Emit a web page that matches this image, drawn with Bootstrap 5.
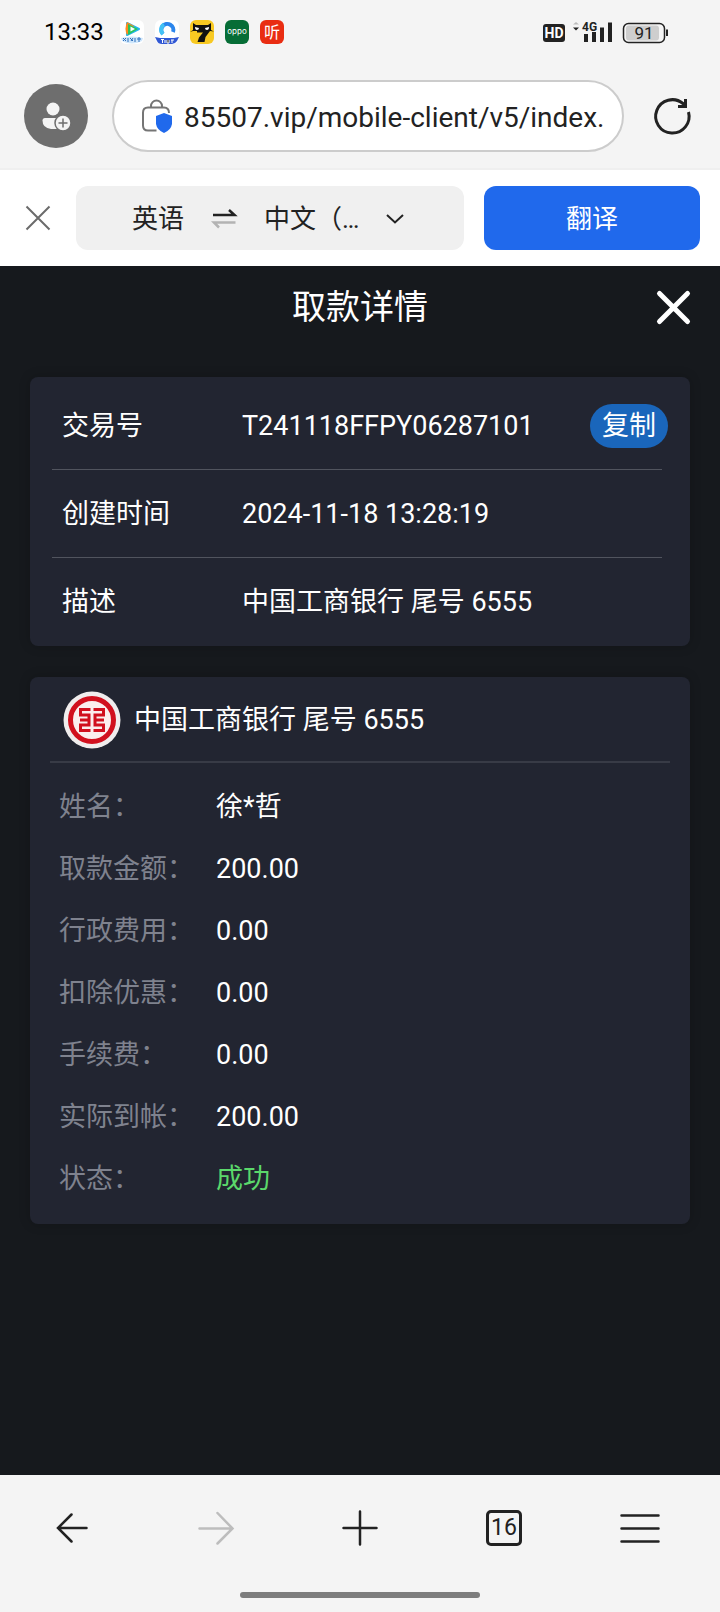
<!DOCTYPE html>
<html lang="zh-CN">
<head>
<meta charset="utf-8">
<meta name="viewport" content="width=device-width, initial-scale=1">
<title>取款详情</title>
<link href="https://cdn.jsdelivr.net/npm/bootstrap@5.3.0/dist/css/bootstrap.min.css" rel="stylesheet">
<style>
  :root { --chrome: #f4f4f4; --ink: #222; --page: #16191d; --panel: #222531; }
  body { font-family: Roboto, "Noto Sans CJK SC", sans-serif; font-size: 27px; line-height: 40px; background: var(--page); color: #fff; }
  svg { display: block; flex: none; overflow: visible; }
  button { font-family: inherit; }
  .bare { border: 0; background: none; padding: 0; color: inherit; }
  .browser-top { background: var(--chrome); color: var(--ink); border-bottom: 2px solid #efefef; }
  .status-bar { height: 64px; padding: 0 52px 0 44px; }
  .clock { font-size: 24px; color: #000; margin-right: 16px; }
  .address-row { padding: 16px 30px 16px 24px; }
  .avatar { width: 64px; height: 64px; background: #6e6e6e; margin-right: 24px; }
  .address { height: 72px; border: 2px solid #ccc; background: #fff; padding: 0 12px 0 28px; margin-right: 30px; min-width: 0; }
  .address input { font-size: 28px; line-height: 40px; color: var(--ink); min-width: 0; outline: 0; margin-left: 10px; padding-top: 3px; }
  .translate-bar { background: #fff; color: var(--ink); padding: 16px 20px 16px 26px; }
  .lang-box { height: 64px; background: #f0f0f0; border-radius: 12px; margin: 0 20px 0 26px; padding: 2px 0 0 56px; font-size: 26px; }
  .lang-box select { appearance: none; width: 112px; font-size: 26px; outline: 0; }
  .btn-translate, .btn-translate:hover { width: 216px; height: 64px; border-radius: 12px; background: #2069ec; color: #fff; font-size: 26px; border: 0; padding: 2px 0 0; }
  .title-bar { display: grid; grid-template-columns: 1fr auto 1fr; align-items: center; height: 82px; padding: 0 30px; }
  .title-bar h1 { font-size: 34px; line-height: 48px; font-weight: 400; margin: 0; grid-column: 2; }
  .panel { background: var(--panel); border-radius: 8px; margin: 0 30px; box-shadow: 0 0 12px rgba(0, 0, 0, .2); }
  .panel-order { margin-top: 29px; margin-bottom: 31px; padding: 5px 28px 0 22px; }
  .order-line { height: 88px; padding-left: 10px; border-bottom: 1px solid #51545e; }
  .order-line:last-child { border-bottom: 0; }
  .order-line dt { width: 180px; }
  dt { font-weight: 400; flex: none; }
  dd { margin: 0; }
  .btn-copy { height: 44px; border-radius: 22px; background: #1a66bb; padding: 0 12px; margin-right: -6px; }
  .panel-bank { padding: 0 20px 14px; }
  .bank-head { height: 86px; padding: 2px 0 0 13px; gap: 13px; border-bottom: 2px solid #383b46; }
  .bank-head h2 { font-size: 27px; line-height: 40px; font-weight: 400; margin: 0; }
  .bank-list { padding: 13px 9px 0; margin: 0; }
  .bank-line { height: 62px; }
  .bank-line dt { width: 157px; color: #7f828e; }
  .success { color: #5bd86b; }
  .bottom-nav { background: var(--chrome); color: var(--ink); padding-bottom: 14px; }
  .tools { height: 106px; margin-bottom: 11px; }
  .tools > * { flex: 1 1 0; }
  .tab-count { width: 36px; height: 36px; border: 3px solid var(--ink); border-radius: 5px; font-size: 23px; line-height: 30px; }
  .home-bar { width: 240px; height: 6px; border-radius: 3px; background: #7d7d7d; }
</style>
</head>
<body class="min-vh-100 d-flex flex-column">

<header class="browser-top">
  <div class="status-bar d-flex align-items-center">
    <span class="clock">13:33</span>
    <svg width="164" height="24" viewBox="0 0 164 24">
      <rect width="24" height="24" rx="6" fill="#fff"/>
      <path d="M7 3 19 9 7 15Z" fill="#23b6f0" stroke="#23b6f0" stroke-width="2" stroke-linejoin="round"/>
      <path d="M7 2 14 6 7 15Q4 9 7 2Z" fill="#ff8a1f"/><path d="M8 4 18 9 8 15Z" fill="#2cc45a"/><path d="M10.500 6.500 15 9 10.500 11.500Z" fill="#fff"/>
      <path d="M1 18Q12 15 23 18L22 21Q12 26 2 21Z" fill="#cfe6fb"/>
      <path d="M3 18l3 3M6 18l-3 3M8 18v4M10 18l3 3M13 18l-2 3M15 18v4M17 19h4M19 17v5" stroke="#2f70bd" stroke-width="1"/>
      <g transform="translate(35)">
        <rect width="24" height="24" rx="6" fill="#fff"/>
        <path d="M8 14A6 6 0 1 1 18 12" fill="none" stroke="#2c86ec" stroke-width="4"/>
        <path d="M8 14A6 6 0 0 1 9 4.500" fill="none" stroke="#43c2f5" stroke-width="4"/>
        <path d="M0 17 5 18H19L24 17 22 21Q20 24 17 24H7Q3 24 2 21Z" fill="#3158d4"/>
        <path d="M6 19.500h3M7.500 19.500v3.500M10 20v3M12 20v3h2v-3M16 20h3M17 20v3" stroke="#fff" stroke-width="1"/>
      </g>
      <g transform="translate(70)">
        <rect width="24" height="24" rx="6" fill="#f8c922"/>
        <path d="M3 3 6 5H18L21 3V10L24 11.500 20 11 15.500 17 14.500 22H7.500L9 17.500 13 12.500H7V11H3L0 12 3 10Z" fill="#111"/>
        <path d="M5 7l4 1q0 2-2 2T5 7ZM19 7l-4 1q0 2 2 2t2-3Z" fill="#fff"/>
      </g>
      <g transform="translate(105)">
        <rect width="24" height="24" rx="6" fill="#066d36"/>
        <text x="12" y="14" font-family="Inter, sans-serif" font-size="8" text-anchor="middle" fill="#fff">oppo</text>
      </g>
      <g transform="translate(140)">
        <rect width="24" height="24" rx="6" fill="#e92d12"/>
        <text x="12" y="18" font-family="Noto Sans CJK SC, sans-serif" font-size="16" text-anchor="middle" fill="#fff">听</text>
      </g>
    </svg>
    <svg class="ms-auto" width="125" height="24" viewBox="0 0 125 24">
      <rect x="0" y="4" width="22" height="18" rx="3" fill="#222"/>
      <text x="11" y="18" font-family="Roboto, sans-serif" font-size="14" font-weight="700" text-anchor="middle" fill="#fff">HD</text>
      <path d="M30 4.500 33 2 36 4.500Z" fill="#bbb"/><path d="M30 7.500h6l-3 3Z" fill="#222"/>
      <text x="39" y="11" font-family="Roboto, sans-serif" font-size="12" font-weight="700" fill="#222">4G</text>
      <path d="M43 14v8M51 12v10M59 7.500v14.500M67 2.500v19.500" stroke="#222" stroke-width="4"/>
      <rect x="80.500" y="3.500" width="41" height="19" rx="5" fill="none" stroke="#222" stroke-width="1.500"/>
      <rect x="83" y="5.500" width="33" height="15" rx="3" fill="#cecece"/>
      <path d="M124 9.500v6.500" stroke="#222" stroke-width="2"/>
      <text x="101" y="18.500" font-family="Roboto, sans-serif" font-size="17" text-anchor="middle" fill="#222">91</text>
    </svg>
  </div>
  <div class="address-row d-flex align-items-center">
    <button class="bare avatar rounded-circle d-flex align-items-center justify-content-center flex-shrink-0" aria-label="账户">
      <svg width="32" height="32" viewBox="0 0 32 32">
        <circle cx="13" cy="9" r="6.500" fill="#f4f4f4"/>
        <path d="M5 18H21V29H11Q2.500 28 2.500 20.500 2.500 18 5 18Z" fill="#f4f4f4"/>
        <circle cx="23" cy="23" r="8" fill="#f4f4f4" stroke="#6e6e6e" stroke-width="1.500"/>
        <path d="M18.500 23h9M23 18.500v9" stroke="#6e6e6e" stroke-width="1.500"/>
      </svg>
    </button>
    <div class="address flex-grow-1 rounded-pill d-flex align-items-center">
      <svg width="32" height="36" viewBox="0 0 32 36">
        <path d="M14.500 32.500H6Q1 32.500 1 27.500V14.500Q1 9.500 6 9.500H22Q27 9.500 27 15M9 9.500V8A5.500 5.500 0 0 1 20 8V9.500" fill="none" stroke="#757575" stroke-width="2"/>
        <path d="M22 15 30 18V26Q29 32 22 35 15 32 14 26V18Z" fill="#2069ec"/>
      </svg>
      <input class="bare flex-grow-1" type="text" aria-label="网址" value="85507.vip/mobile-client/v5/index.">
    </div>
    <button class="bare" aria-label="刷新">
      <svg width="36" height="36" viewBox="0 0 36 36" fill="none" stroke="#222" stroke-width="3">
        <path d="M34.500 14A16.700 16.700 0 1 1 29 5.500L31.500 8.500"/>
        <path d="M31.500 1V8.500H24"/>
      </svg>
    </button>
  </div>
</header>

<section class="translate-bar d-flex align-items-center">
  <button class="bare" aria-label="关闭翻译">
    <svg width="24" height="24" viewBox="0 0 24 24" stroke="#6b6b6b" stroke-width="2"><path d="M.5.5 23.500 23.500M23.500.5.5 23.500"/></svg>
  </button>
  <div class="lang-box d-flex align-items-center flex-grow-1">
    <button class="bare">英语</button>
    <button class="bare mx-4 px-1" aria-label="互换语言">
      <svg width="24" height="20" viewBox="0 0 24 20" fill="none" stroke-width="2.500">
        <path d="M1 6H22.500L17 1" stroke="#222"/><path d="M23.500 13.500H2L7 18.500" stroke="#b3b3b3"/>
      </svg>
    </button>
    <label class="d-flex align-items-center" aria-label="目标语言">
      <select class="bare"><option>中文（…</option></select>
      <svg class="ms-2" width="20" height="12" viewBox="0 0 20 12" fill="none" stroke="#222" stroke-width="2"><path d="M3 2 11 9.500 19 2"/></svg>
    </label>
  </div>
  <button class="btn btn-primary btn-translate flex-shrink-0">翻译</button>
</section>

<main class="flex-grow-1">
  <div class="title-bar">
    <h1>取款详情</h1>
    <button class="bare ms-auto" aria-label="关闭">
      <svg width="33" height="33" viewBox="0 0 33 33" stroke="#fff" stroke-width="5" stroke-linecap="round"><path d="M2.500 2.500 30.500 30.500M30.500 2.500 2.500 30.500"/></svg>
    </button>
  </div>

  <dl class="panel panel-order">
    <div class="order-line d-flex align-items-center">
      <dt>交易号</dt>
      <dd>T241118FFPY06287101</dd>
      <dd class="ms-auto"><button class="bare btn-copy d-block">复制</button></dd>
    </div>
    <div class="order-line d-flex align-items-center"><dt>创建时间</dt><dd>2024-11-18 13:28:19</dd></div>
    <div class="order-line d-flex align-items-center"><dt>描述</dt><dd>中国工商银行 尾号 6555</dd></div>
  </dl>

  <section class="panel panel-bank">
    <div class="bank-head d-flex align-items-center">
      <svg width="58" height="58" viewBox="0 0 58 58">
        <circle cx="29" cy="29" r="28.500" fill="#f0eded"/>
        <circle cx="29" cy="29" r="21.500" fill="#fbeeee" stroke="#d1101e" stroke-width="5"/>
        <path d="M27.500 18.500H17.500V24H26V34H17.500V39.500H27.500M17 29H26M30.500 18.500H40.500V24H32V34H40.500V39.500H30.500M41 29H32" fill="none" stroke="#d1101e" stroke-width="3"/>
      </svg>
      <h2>中国工商银行 尾号 6555</h2>
    </div>
    <dl class="bank-list">
      <div class="bank-line d-flex align-items-center"><dt>姓名：</dt><dd>徐*哲</dd></div>
      <div class="bank-line d-flex align-items-center"><dt>取款金额：</dt><dd>200.00</dd></div>
      <div class="bank-line d-flex align-items-center"><dt>行政费用：</dt><dd>0.00</dd></div>
      <div class="bank-line d-flex align-items-center"><dt>扣除优惠：</dt><dd>0.00</dd></div>
      <div class="bank-line d-flex align-items-center"><dt>手续费：</dt><dd>0.00</dd></div>
      <div class="bank-line d-flex align-items-center"><dt>实际到帐：</dt><dd>200.00</dd></div>
      <div class="bank-line d-flex align-items-center"><dt>状态：</dt><dd class="success">成功</dd></div>
    </dl>
  </section>
</main>

<footer class="bottom-nav">
  <nav class="tools d-flex" aria-label="浏览器工具栏">
    <button class="bare d-flex align-items-center justify-content-center" aria-label="后退">
      <svg width="32" height="32" viewBox="0 0 32 32" fill="none" stroke="#222" stroke-width="2.500" stroke-linecap="round"><path d="M15.500 2.500 2 16 15.500 29.500M2 16H30.500"/></svg>
    </button>
    <button class="bare d-flex align-items-center justify-content-center" aria-label="前进">
      <svg width="36" height="36" viewBox="0 0 36 36" fill="none" stroke="#bdbdbd" stroke-width="2.500" stroke-linecap="round"><path d="M19.500 3 34.500 18.500 19.500 33.500M1.500 18.500H34"/></svg>
    </button>
    <button class="bare d-flex align-items-center justify-content-center" aria-label="新建标签页">
      <svg width="36" height="36" viewBox="0 0 36 36" stroke="#222" stroke-width="2.500" stroke-linecap="round"><path d="M1.500 18H34.500M18 1.500V34.500"/></svg>
    </button>
    <button class="bare d-flex align-items-center justify-content-center" aria-label="标签页">
      <span class="tab-count text-center">16</span>
    </button>
    <button class="bare d-flex align-items-center justify-content-center" aria-label="菜单">
      <svg class="me-3" width="40" height="32" viewBox="0 0 40 32" stroke="#222" stroke-width="2.500" stroke-linecap="round"><path d="M1.500 3.500H38.500M1.500 16.500H38.500M1.500 29.500H38.500"/></svg>
    </button>
  </nav>
  <div class="home-bar mx-auto"></div>
</footer>

<script src="https://cdn.jsdelivr.net/npm/bootstrap@5.3.0/dist/js/bootstrap.bundle.min.js"></script>
</body>
</html>
